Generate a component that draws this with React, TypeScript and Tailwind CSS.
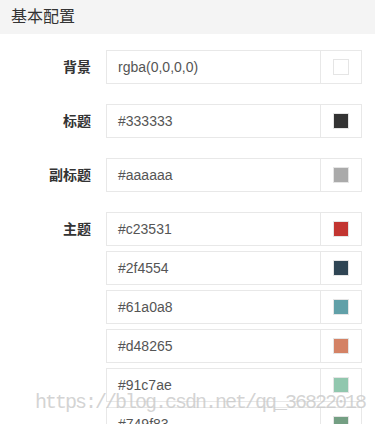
const groups = [
  { label: '背景', colors: ['rgba(0,0,0,0)'] },
  { label: '标题', colors: ['#333333'] },
  { label: '副标题', colors: ['#aaaaaa'] },
  { label: '主题', colors: ['#c23531', '#2f4554', '#61a0a8', '#d48265', '#91c7ae', '#749f83'] },
]

function ColorInput({ value }: { value: string }) {
  return (
    <div className="flex h-[34px] border border-[#e8e8e8] bg-white">
      <div className="flex flex-1 items-center pl-[11px] text-[14px] text-[#555]">{value}</div>
      <div className="flex w-[41px] items-center justify-center border-l border-[#e8e8e8]">
        <div className="h-[16px] w-[16px] border border-[#e5e5e5]" style={{ background: value }} />
      </div>
    </div>
  )
}

export default function App() {
  return (
    <div className="relative h-[424px] w-[375px] overflow-hidden bg-white font-['Liberation_Sans','Noto_Sans_CJK_SC',sans-serif]">
      <div className="flex h-[34px] items-center bg-[#f4f4f4] pl-[11px] text-[16px] text-[#333]">
        基本配置
      </div>
      <div className="flex flex-col gap-[20px] pt-[16px] pr-[13px]">
        {groups.map((g) => (
          <div key={g.label} className="flex">
            <div className="flex h-[34px] w-[91px] shrink-0 items-center justify-end text-[14px] font-bold text-[#333]">
              {g.label}
            </div>
            <div className="ml-[15px] flex flex-1 flex-col gap-[5px]">
              {g.colors.map((c) => (
                <ColorInput key={c} value={c} />
              ))}
            </div>
          </div>
        ))}
      </div>
      <div className="pointer-events-none absolute left-[35px] top-[393px] whitespace-nowrap font-mono text-[20px] leading-[20px] tracking-[-2px] text-[#c8c8c8]/80">
        https://blog.csdn.net/qq_36822018
      </div>
    </div>
  )
}
